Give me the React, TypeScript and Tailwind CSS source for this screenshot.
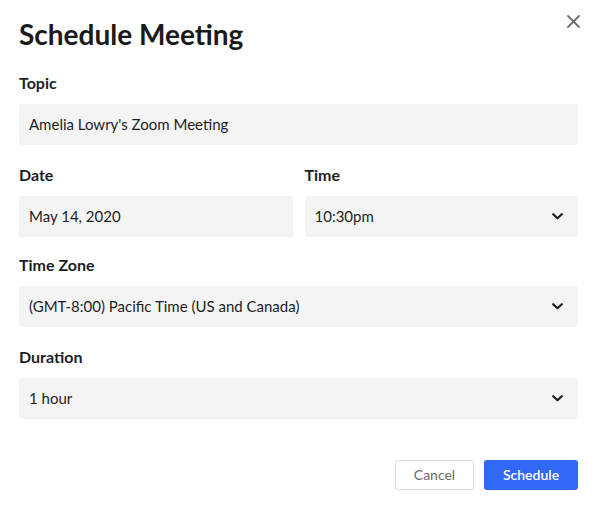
import React from "react";

function Chevron() {
  return (
    <svg width="11" height="7" viewBox="0 0 11 7" fill="none" className="shrink-0">
      <path d="M1.2 1.2 L5.5 5.3 L9.8 1.2" stroke="#1f1f1f" strokeWidth="2.2" strokeLinecap="round" strokeLinejoin="round" />
    </svg>
  );
}

function Field({ label, children, className = "" }: { label: string; children: React.ReactNode; className?: string }) {
  return (
    <div className={"flex flex-col " + className}>
      <div className="h-5 leading-5 text-[16px] font-bold text-[#1e1e1e] mb-[11px]">{label}</div>
      {children}
    </div>
  );
}

function Box({ value, select }: { value: string; select?: boolean }) {
  return (
    <div className="h-[41px] bg-[#f4f4f4] rounded-[3px] flex items-center justify-between pl-[10px] pr-[15px] pb-[1px]">
      <span className="text-[15px] leading-5 text-[#1e1e1e]">{value}</span>
      {select ? <Chevron /> : null}
    </div>
  );
}

export default function App() {
  return (
    <div className="relative w-[596px] h-[508px] bg-white pl-[19px] pr-[18px] pt-4 font-['Lato',sans-serif]">
      <button className="absolute right-[16px] top-[14px] w-[14px] h-[14px] flex items-center justify-center" aria-label="Close">
        <svg width="13" height="13" viewBox="0 0 13 13" fill="none">
          <path d="M1 1 L12 12 M12 1 L1 12" stroke="#6d6f75" strokeWidth="1.8" strokeLinecap="round" />
        </svg>
      </button>
      <h1 className="text-[28px] leading-9 font-bold text-[#1a1a1a] mb-[21px]">Schedule Meeting</h1>
      <div className="flex flex-col">
        <Field label="Topic">
          <Box value="Amelia Lowry's Zoom Meeting" />
        </Field>
        <div className="grid grid-cols-2 gap-3 mt-5">
          <Field label="Date">
            <Box value="May 14, 2020" />
          </Field>
          <Field label="Time">
            <Box value="10:30pm" select />
          </Field>
        </div>
        <Field label="Time Zone" className="mt-[18px]">
          <Box value="(GMT-8:00) Pacific Time (US and Canada)" select />
        </Field>
        <Field label="Duration" className="mt-5">
          <Box value="1 hour" select />
        </Field>
      </div>
      <div className="flex justify-end gap-[10px] mt-[41px]">
        <button className="w-[79px] h-[30px] pb-[2px] rounded-[3px] border border-[#dcdcdc] bg-white text-[14px] text-[#6b6b6b]">Cancel</button>
        <button className="w-[94px] h-[30px] pb-[2px] rounded-[3px] bg-[#3168f6] text-[14px] text-white font-semibold">Schedule</button>
      </div>
    </div>
  );
}
